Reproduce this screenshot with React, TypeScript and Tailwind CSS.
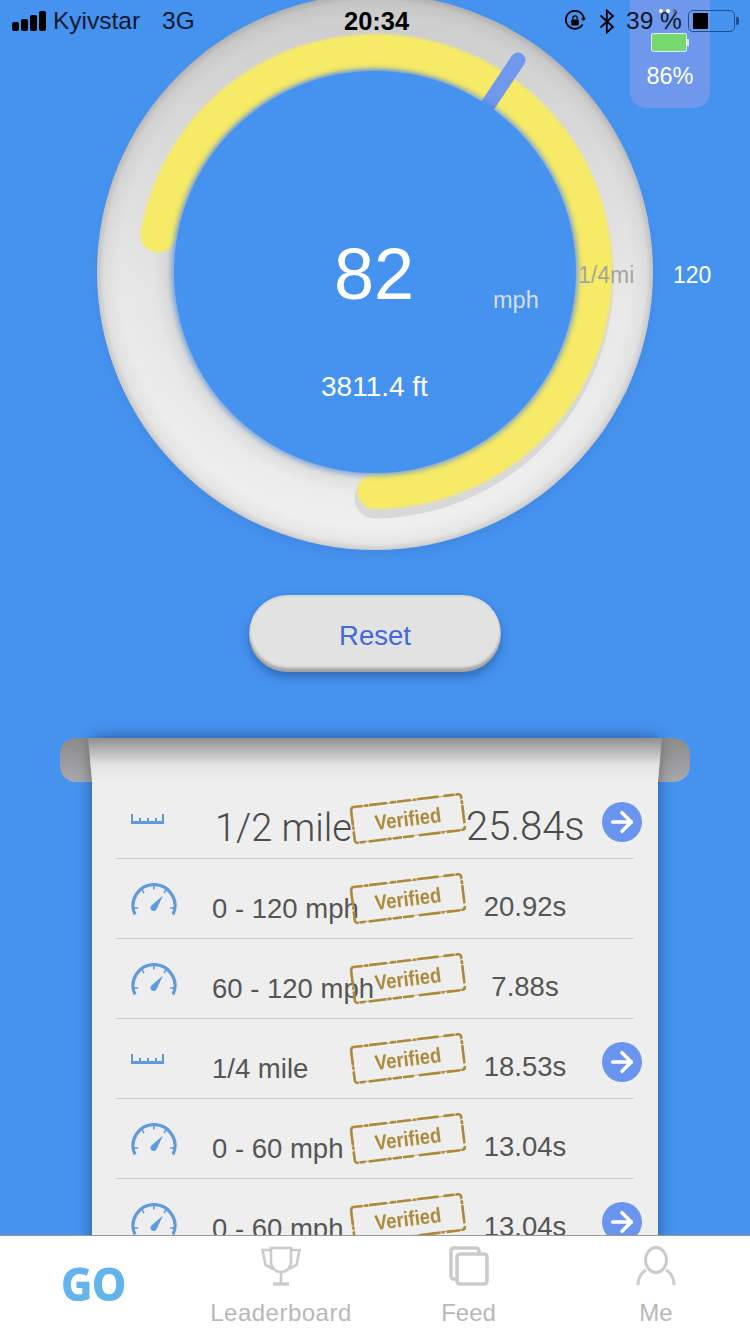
import { ArrowRight } from "lucide-react";

const ui = "font-['Liberation_Sans',Arial,sans-serif]";
const thin = "font-['Roboto',sans-serif] font-light";

type Row = { icon: "ruler" | "gauge"; label: string; time: string; arrow?: boolean; big?: boolean };

const rows: Row[] = [
  { icon: "ruler", label: "1/2 mile", time: "25.84s", arrow: true, big: true },
  { icon: "gauge", label: "0 - 120 mph", time: "20.92s" },
  { icon: "gauge", label: "60 - 120 mph", time: "7.88s" },
  { icon: "ruler", label: "1/4 mile", time: "18.53s", arrow: true },
  { icon: "gauge", label: "0 - 60 mph", time: "13.04s" },
  { icon: "gauge", label: "0 - 60 mph", time: "13.04s", arrow: true },
];

function RulerIcon() {
  return (
    <svg width="33" height="11" viewBox="0 0 33 11" fill="none" stroke="#5f9bdc">
      <path d="M0 9.500h33" strokeWidth="3" />
      <path d="M1 1v8M9 5v4M17 5v4M25 5v4M32 1v8" strokeWidth="2" />
    </svg>
  );
}

function GaugeIcon() {
  return (
    <svg width="46" height="32" viewBox="0 0 46 32" fill="none" stroke="#5f9bdc">
      <path d="M4 31.500A21 21 0 1 1 42 31.500" strokeWidth="3.200" />
      <path d="M23 3v3.500M11 7l2 3M35 7l-2 3M3 25h4M43 25h-4" strokeWidth="1.600" />
      <path d="M32 12.500 21 22a3.200 3.200 0 1 0 4.500 4.200z" fill="#5f9bdc" stroke="none" />
    </svg>
  );
}

function Stamp() {
  return (
    <div className="absolute left-[236px] top-[21px] flex h-[37px] w-[112px] rotate-[-7deg] items-center justify-center">
      <svg className="absolute inset-0 overflow-visible" width="112" height="37" viewBox="0 0 112 37" fill="none" stroke="#ab8b3b">
        <rect x="0.5" y="0.5" width="111" height="36" rx="3" strokeWidth="2.600" strokeDasharray="9 1.500 4 1 18 3 6 1 14 2 3 1 22 5 11 1" />
        <rect x="1" y="1" width="110" height="35" rx="3" strokeWidth="1" strokeDasharray="3 2 7 1 2 4 12 2" opacity="0.7" />
      </svg>
      <span className={`${ui} scale-x-[.88] text-[21px] font-bold leading-none text-[#ab8b3b]`}>Verified</span>
    </div>
  );
}

function StatusBar() {
  return (
    <div className={`${ui} absolute inset-x-0 top-0 z-20 flex h-[42px] items-center text-[24.5px] text-[#0b1a2e]`}>
      <div className="ml-[12px] flex items-end gap-[2px]">
        <span className="h-[9px] w-[7px] rounded-[2px] bg-black" />
        <span className="h-[12px] w-[7px] rounded-[2px] bg-black" />
        <span className="h-[16px] w-[7px] rounded-[2px] bg-black" />
        <span className="h-[20px] w-[7px] rounded-[2px] bg-black" />
      </div>
      <span className="ml-[7px] w-[89px] whitespace-nowrap">Kyivstar</span>
      <span className="ml-[20px] w-[31px]">3G</span>
      <span className="ml-[151px] w-[68px] text-[25.5px] font-bold text-black">20:34</span>
      <svg className="ml-[152px]" width="22" height="22" viewBox="0 0 22 22" fill="none" stroke="#000" strokeWidth="1.8">
        <path d="M18.500 14.500A9 9 0 1 1 19.800 9" />
        <path d="m16.800 8.500 3 2.600 2-3.200" fill="#000" stroke="none" />
        <rect x="7.200" y="9.500" width="7.600" height="6" rx="1" fill="#000" stroke="none" />
        <path d="M8.800 9.500V8a2.200 2.200 0 0 1 4.400 0v1.500" strokeWidth="1.300" />
      </svg>
      <svg className="ml-[13px]" width="16" height="25" viewBox="0 0 16 25" fill="none" stroke="#000" strokeWidth="1.8">
        <path d="M1.500 6.500 14 18l-6.200 5.500v-22L14 7 1.500 18.500" />
      </svg>
      <span className="ml-[11px] w-[56px] whitespace-nowrap">39 %</span>
      <div className="ml-[6px] flex h-[22px] w-[47px] items-center rounded-[5px] border-[1.5px] border-[#1f4f8f] p-[2px]">
        <span className="ml-[2px] h-full w-[15px] rounded-[1px] bg-black" />
      </div>
      <span className="ml-[1px] h-[8px] w-[3px] rounded-r-[2px] bg-[#1f4f8f]" />
    </div>
  );
}

function Gauge() {
  return (
    <div className="relative h-[550px] w-[750px]">
      <svg className="absolute inset-0 overflow-visible" width="750" height="550" viewBox="0 0 750 550">
        <defs>
          <radialGradient id="ringEdge" cx="375" cy="272" r="278" gradientUnits="userSpaceOnUse">
            <stop offset="0.72" stopColor="#dadada" />
            <stop offset="0.8" stopColor="#ededed" />
            <stop offset="0.92" stopColor="#f0f0f0" />
            <stop offset="0.975" stopColor="#e6e6e6" />
            <stop offset="1" stopColor="#cccccc" />
          </radialGradient>
          <linearGradient id="ringTop" x1="0" y1="-6" x2="0" y2="550" gradientUnits="userSpaceOnUse">
            <stop offset="0" stopColor="#000" stopOpacity="0.15" />
            <stop offset="0.55" stopColor="#000" stopOpacity="0.03" />
            <stop offset="1" stopColor="#000" stopOpacity="0" />
          </linearGradient>
          <filter id="soft" x="-10%" y="-10%" width="120%" height="120%">
            <feGaussianBlur stdDeviation="2.500" />
          </filter>
          <filter id="softYellow" x="-10%" y="-10%" width="120%" height="120%">
            <feGaussianBlur stdDeviation="0.800" />
          </filter>
          <filter id="ringShadow" x="-10%" y="-10%" width="120%" height="120%">
            <feGaussianBlur stdDeviation="5" />
          </filter>
        </defs>

        <circle cx="375" cy="278" r="277" fill="#2f6fc0" opacity="0.25" filter="url(#ringShadow)" />
        <circle cx="375" cy="272" r="278" fill="url(#ringEdge)" />
        <circle cx="375" cy="272" r="278" fill="url(#ringTop)" />

        {/* recessed track under the yellow band */}
        <path d="M485 87A221 221 0 0 1 375 498" fill="none" stroke="#d8d8d8" strokeWidth="41" strokeLinecap="round" />
        {/* progress band */}
        <path d="M158 235A220 220 0 1 1 375 491.500" fill="none" stroke="#f6ea66" strokeWidth="35" strokeLinecap="round" filter="url(#softYellow)" />
        {/* needle */}
        <path d="M486 108 518 60" stroke="#7098ec" strokeWidth="15" strokeLinecap="round" />
        {/* dial face */}
        <circle cx="375" cy="272" r="204" fill="#3f82d8" opacity="0.55" filter="url(#soft)" />
        <circle cx="375" cy="272" r="201" fill="#4692ef" />
      </svg>

      <span className={`${ui} absolute left-[334px] top-[234px] text-[72px] leading-[80px] text-white`}>82</span>
      <span className={`${ui} absolute left-[493px] top-[287px] text-[23.5px] leading-[26px] text-[#d5def0]`}>mph</span>
      <span className={`${ui} absolute left-[578px] top-[262px] text-[23px] leading-[26px] text-[#a5a59a]`}>1/4mi</span>
      <span className={`${ui} absolute left-[673px] top-[262px] text-[23px] leading-[26px] text-white`}>120</span>
      <span className={`${ui} absolute left-[321px] top-[372px] text-[28px] leading-[30px] text-white`}>3811.4 ft</span>

      {/* charge level card */}
      <div className="absolute left-[630px] top-[-10px] flex h-[118px] w-[80px] flex-col items-center rounded-b-[16px] bg-[#6f97ec]">
        <div className="absolute left-[29px] top-[19px] z-30 flex gap-[3px]">
          <span className="size-[4px] rounded-full bg-white" />
          <span className="size-[4px] rounded-full bg-white" />
          <span className="size-[4px] rounded-full bg-[#5a6a80]" />
        </div>
        <div className="mt-[43px] flex items-center">
          <span className="h-[19px] w-[36px] rounded-[2px] border border-[#dfe8f8] bg-[#76d86d]" />
          <span className="h-[7px] w-[2px] bg-[#dfe8f8]" />
        </div>
        <span className={`${ui} mt-[11px] text-[23.5px] leading-[26px] text-white`}>86%</span>
      </div>
    </div>
  );
}

function TimeRow({ row, last }: { row: Row; last: boolean }) {
  return (
    <div className={`relative flex h-[80px] items-center ${last ? "" : "border-b border-[#cccccc]"}`}>
      <div className="flex w-[96px] shrink-0 pl-[15px]">{row.icon === "ruler" ? <RulerIcon /> : <GaugeIcon />}</div>
      <span
        className={`w-[254px] shrink-0 whitespace-nowrap ${
          row.big
            ? `${thin} mt-[20px] pl-[3px] text-[38px] text-[#4a4a4a]`
            : `${ui} mt-[20px] text-[27.5px] text-[#555555]`
        }`}
      >
        {row.label}
      </span>
      <span
        className={`mt-[16px] w-[118px] shrink-0 whitespace-nowrap text-center ${
          row.big ? `${thin} text-[40px] text-[#4a4a4a]` : `${ui} text-[27.5px] text-[#555555]`
        }`}
      >
        {row.time}
      </span>
      {row.arrow && (
        <span className="ml-[18px] mt-[6px] flex size-[40px] shrink-0 items-center justify-center rounded-full bg-[#6a95ee]">
          <ArrowRight size={32} strokeWidth={2.6} color="#fff" />
        </span>
      )}
      <Stamp />
    </div>
  );
}

function Sheet() {
  return (
    <div className="relative mx-[60px] mt-[66px] h-[600px]">
      {/* roller behind the paper */}
      <div className="absolute inset-x-0 top-0 h-[44px] rounded-[16px] bg-gradient-to-b from-[#8b8b8b] to-[#a9a9ad]" />
      <div className="relative mx-[32px] h-full bg-[#eeeeee] px-[24px] pt-[41px] shadow-[0_0_14px_rgba(0,0,0,0.4)]">
        {rows.map((row, i) => (
          <TimeRow key={i} row={row} last={i === rows.length - 1} />
        ))}
      </div>
      {/* paper curling over the roller */}
      <div className="absolute left-[28px] right-[28px] top-0 h-[44px] bg-gradient-to-b from-[#909090] via-[#e2e2e2] via-60% to-[#eeeeee] [clip-path:polygon(0_0,100%_0,calc(100%-4px)_100%,4px_100%)]" />
    </div>
  );
}

function TabBar() {
  const stroke = "#cbcbcb";
  return (
    <div className={`${ui} absolute inset-x-0 bottom-0 z-10 grid h-[99px] grid-cols-[187px_188px_187px_188px] border-t border-[#999999] bg-white text-[24px] leading-[28px] text-[#b8b8b8]`}>
      <div className="flex items-center justify-center pb-[4px]">
        <span className="scale-x-[.95] font-['Noto_Sans',sans-serif] text-[46px] font-extrabold leading-none tracking-[-1px] text-[#63b4ea]">
          GO
        </span>
      </div>
      <div className="flex flex-col items-center pt-[10px]">
        <svg width="40" height="40" viewBox="0 0 40 40" fill="none" stroke={stroke} strokeWidth="2.6">
          <path d="M10 2h20v14a10 10 0 0 1-20 0zM10 4H1.500l3 15 7.500 4M30 4h8.500l-3 15-7.500 4M20 26v11" />
          <path d="M12 38h16" strokeWidth="3.4" />
        </svg>
        <span className="mt-[13px] whitespace-nowrap tracking-[0.5px]">Leaderboard</span>
      </div>
      <div className="flex flex-col items-center pt-[10px]">
        <svg width="40" height="40" viewBox="0 0 40 40" fill="none" stroke={stroke} strokeWidth="3.6">
          <path d="M8 33H5a3 3 0 0 1-3-3V5a3 3 0 0 1 3-3h22a3 3 0 0 1 3 3v3" />
          <rect x="8" y="8" width="30" height="30" rx="3" />
        </svg>
        <span className="mt-[13px]">Feed</span>
      </div>
      <div className="flex flex-col items-center pt-[10px]">
        <svg width="40" height="40" viewBox="0 0 40 40" fill="none" stroke={stroke} strokeWidth="3">
          <ellipse cx="20" cy="14" rx="10.500" ry="12.500" />
          <path d="M2 39c0-7 3-12 8-15M38 39c0-7-3-12-8-15" />
        </svg>
        <span className="mt-[13px]">Me</span>
      </div>
    </div>
  );
}

export default function App() {
  return (
    <div className={`${ui} relative h-[1334px] w-[750px] overflow-hidden bg-[#4692ef]`}>
      <Gauge />
      <StatusBar />
      <div className="mx-auto mt-[45px] flex h-[77px] w-[252px] items-center justify-center rounded-full bg-[#e2e2e2] pt-[5px] text-[27.5px] text-[#4468d8] shadow-[inset_0_-4px_3px_rgba(0,0,0,0.28),inset_0_2px_2px_rgba(0,0,0,0.06),0_5px_10px_rgba(20,60,120,0.45)]">
        Reset
      </div>
      <Sheet />
      <TabBar />
    </div>
  );
}
